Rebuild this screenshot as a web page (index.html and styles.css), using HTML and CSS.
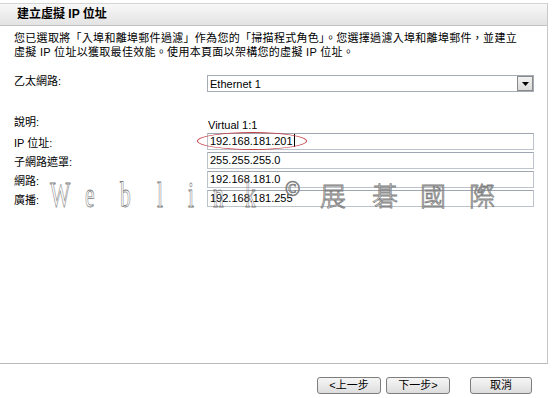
FILE: index.html
```html
<!DOCTYPE html>
<html lang="zh-Hant">
<head>
    <meta charset="UTF-8">
    <title>建立虛擬 IP 位址</title>
    <link rel="stylesheet" href="styles.css">
</head>
<body>
    <div class="panel">
        <div class="panel-head">建立虛擬 IP 位址</div>
        <p class="intro">您已選取將「入埠和離埠郵件過濾」作為您的「掃描程式角色」。您選擇過濾入埠和離埠郵件，並建立<br>虛擬 IP 位址以獲取最佳效能。使用本頁面以架構您的虛擬 IP 位址。</p>

        <div class="form">
            <div class="row row-select">
                <label>乙太網路:</label>
                <div class="select">
                    <span>Ethernet 1</span>
                    <span class="drop">
                        <svg width="7" height="4" viewBox="0 0 7 4"><path d="M0 0h7L3.5 4z" fill="#000"/></svg>
                    </span>
                </div>
            </div>
            <div class="row row-desc">
                <label>說明:</label>
                <span class="value">Virtual 1:1</span>
            </div>
            <div class="row">
                <label>IP 位址:</label>
                <div class="field">192.168.181.201<span class="caret"></span></div>
            </div>
            <div class="row">
                <label>子網路遮罩:</label>
                <div class="field">255.255.255.0</div>
            </div>
            <div class="row">
                <label>網路:</label>
                <div class="field">192.168.181.0</div>
            </div>
            <div class="row">
                <label>廣播:</label>
                <div class="field">192.168.181.255</div>
            </div>
        </div>
    </div>

    <div class="actions">
        <button class="btn">&lt;上一步</button>
        <button class="btn">下一步&gt;</button>
        <button class="btn btn-cancel">取消</button>
    </div>

    <!-- annotation and watermark over the screen -->
    <div class="circle-mark"></div>
    <div class="watermark">
        <span class="lat">W</span><span class="lat">e</span><span class="lat">b</span><span class="lat">l</span><span class="lat">i</span><span class="lat">n</span><span class="lat">k</span><span class="copy">©</span><span class="cjk">展</span><span class="cjk">碁</span><span class="cjk">國</span><span class="cjk">際</span>
    </div>
</body>
</html>
```

FILE: styles.css
```css
/* Reset and page */
* {
    box-sizing: border-box;
    margin: 0;
    padding: 0;
}

body {
    font-family: "Liberation Sans", "Noto Sans CJK TC", sans-serif;
    font-size: 11px;
    color: #000;
    background: #fff;
    position: relative;
    width: 554px;
    height: 398px;
    overflow: hidden;
}

/* Wizard panel */
.panel {
    margin-top: 3px;
    width: 548px;
    height: 361px;
    border-top: 1px solid #d4d4d4;
    border-right: 1px solid #c8c8c8;
    border-bottom: 1px solid #b9b9b9;
}

.panel-head {
    height: 22px;
    padding-left: 17px;
    background: linear-gradient(#f8f8f8, #e3e3e3);
    border-bottom: 1px solid #c2c2c2;
    font-size: 12px;
    font-weight: bold;
    line-height: 21px;
}

.intro {
    padding: 5px 14px 0;
    line-height: 14px;
    font-size: 11px;
    letter-spacing: 0.3px;
}

/* Form rows */
.form {
    margin-top: 16px;
    padding-left: 14px;
}

.row {
    display: flex;
    align-items: center;
    height: 17px;
    margin-bottom: 2px;
}

.row label {
    width: 193px;
    flex-shrink: 0;
}

.row-select {
    margin-bottom: 24px;
}

.row-select label {
    align-self: flex-start;
    line-height: 12px;
}

.row-desc {
    height: 15px;
}

.row-desc label {
    align-self: flex-start;
    line-height: 12px;
}

.row-desc .value {
    align-self: flex-end;
    line-height: 12px;
    padding-left: 1px;
}

.select {
    width: 327px;
    height: 17px;
    display: flex;
    align-items: center;
    justify-content: space-between;
    padding-left: 2px;
    border: 1px solid #a5acb5;
}

.drop {
    width: 16px;
    height: 15px;
    display: flex;
    align-items: center;
    justify-content: center;
    background: linear-gradient(#f2f2f2, #dadada);
    border: 1px solid #8a8a8a;
}

.field {
    width: 327px;
    height: 17px;
    padding-left: 2px;
    border: 1px solid #bcc3cc;
    border-top-color: #9ea6b1;
    line-height: 15px;
}

.caret {
    display: inline-block;
    width: 1px;
    height: 13px;
    margin-left: 1px;
    vertical-align: -2px;
    background: #000;
}

/* Buttons */
.actions {
    display: flex;
    justify-content: flex-end;
    padding-right: 22px;
    margin-top: 13px;
}

.btn {
    width: 64px;
    height: 17px;
    margin-left: 5px;
    font-family: "Liberation Sans", "Noto Sans CJK TC", sans-serif;
    font-size: 11px;
    line-height: 15px;
    color: #000;
    background: linear-gradient(#f6f6f6, #dddddd);
    border: 1px solid #7d7d7d;
    border-radius: 3px;
}

.btn-cancel {
    width: 62px;
    margin-left: 20px;
}

/* Red ring drawn over the IP value */
.circle-mark {
    position: absolute;
    left: 197px;
    top: 132px;
    width: 110px;
    height: 18px;
    border: 1px solid #c4424a;
    border-radius: 50%;
}

/* Outlined watermark over the form */
.watermark {
    position: absolute;
    left: 50px;
    top: 177px;
    display: flex;
    align-items: flex-start;
    color: transparent;
    -webkit-text-stroke: 0.8px #808080;
    pointer-events: none;
}

.watermark .lat {
    display: inline-block;
    font-family: "Liberation Serif", serif;
    font-size: 36px;
    line-height: 36px;
    transform: scaleX(0.6);
    transform-origin: left top;
}

.watermark .lat:nth-child(1) { width: 35px; }
.watermark .lat:nth-child(2) { width: 35px; }
.watermark .lat:nth-child(3) { width: 37px; }
.watermark .lat:nth-child(4) { width: 31px; }
.watermark .lat:nth-child(5) { width: 25px; }
.watermark .lat:nth-child(6) { width: 32px; }
.watermark .lat:nth-child(7) { width: 40px; }

.watermark .copy {
    width: 35px;
    margin-top: 2px;
    font-family: "Liberation Serif", serif;
    font-size: 20px;
    line-height: 20px;
}

.watermark .cjk {
    width: 50px;
    font-family: "Noto Sans CJK TC", sans-serif;
    font-size: 26px;
    line-height: 36px;
    font-weight: 300;
}

.watermark .cjk:nth-child(9) { width: 52px; }
.watermark .cjk:nth-child(10) { width: 48px; }
.watermark .cjk:nth-child(11) { width: 49px; }
```
